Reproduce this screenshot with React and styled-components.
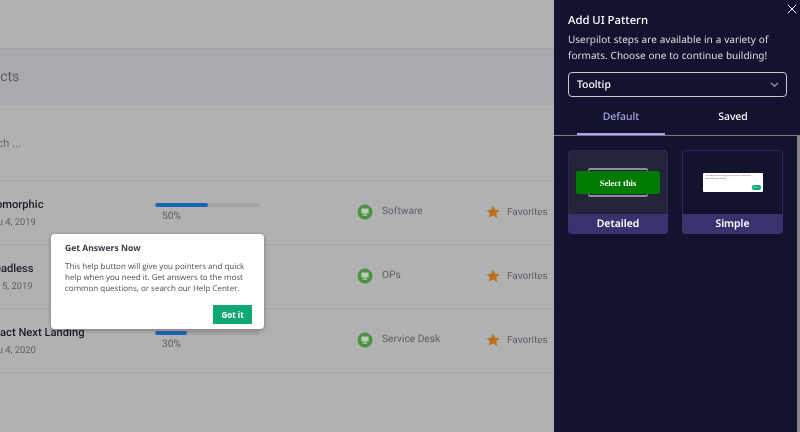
import React from "react";
import styled, { createGlobalStyle } from "styled-components";

const rows = [
  { name: "Isomorphic", date: "Thu 4, 2019", progress: 50, category: "Software" },
  { name: "Headless", date: "Jul 5, 2019", progress: 70, category: "OPs" },
  { name: "React Next Landing", date: "Thu 4, 2020", progress: 30, category: "Service Desk" },
];

const MonitorIcon = () => (
  <svg width="16" height="16" viewBox="0 0 16 16">
    <circle cx="8" cy="8" r="7.5" fill="#4c9244" />
    <rect x="4.4" y="4.4" width="7.2" height="5.2" rx="0.6" fill="#bccdb8" />
    <rect x="7" y="9.6" width="2" height="1.2" fill="#bccdb8" />
    <rect x="5.6" y="10.8" width="4.8" height="0.9" fill="#bccdb8" />
  </svg>
);

const StarIcon = () => (
  <svg width="14" height="14" viewBox="0 0 24 24">
    <path
      d="M12 1l3.4 7.3 7.9 1-5.8 5.4 1.5 7.9L12 17.8l-7 3.8 1.5-7.9L.7 9.3l7.9-1z"
      fill="#b96f1d"
    />
  </svg>
);

const App = () => {
  return (
    <>
      <GlobalStyle />
      <Page>
        <Main>
          <Content>
            <TopBar />
            <Band>Projects</Band>
            <SearchRow>Search ...</SearchRow>
            {rows.map((row) => (
              <Row key={row.name}>
                <NameCell>
                  <Name>{row.name}</Name>
                  <DateText>{row.date}</DateText>
                </NameCell>
                <ProgressCell>
                  <Track>
                    <Fill style={{ width: `${row.progress}%` }} />
                  </Track>
                  <Percent>{row.progress}%</Percent>
                </ProgressCell>
                <Category>
                  <MonitorIcon />
                  <span>{row.category}</span>
                </Category>
                <Favorite>
                  <StarIcon />
                  <span>Favorites</span>
                </Favorite>
              </Row>
            ))}
          </Content>
          <Popover>
            <PopTitle>Get Answers Now</PopTitle>
            <PopBody>
              This help button will give you pointers and quick help when you
              need it. Get answers to the most common questions, or search our
              Help Center.
            </PopBody>
            <PopFooter>
              <GotIt>Got it</GotIt>
            </PopFooter>
          </Popover>
        </Main>
        <Panel>
          <Close aria-label="Close">
            <svg width="10" height="10" viewBox="0 0 10 10">
              <path d="M.7.7l8.6 8.6M9.3.7L.7 9.3" stroke="#fff" strokeWidth="1" fill="none" />
            </svg>
          </Close>
          <PanelHead>
            <PanelTitle>Add UI Pattern</PanelTitle>
            <PanelText>
              Userpilot steps are available in a variety of formats. Choose one
              to continue building!
            </PanelText>
            <Select>
              <span>Tooltip</span>
              <svg width="9" height="9" viewBox="0 0 9 9">
                <path d="M1 2.8l3.5 3.4L8 2.8" stroke="#a9abb8" strokeWidth="1.1" fill="none" />
              </svg>
            </Select>
          </PanelHead>
          <Tabs>
            <Tab $active>Default</Tab>
            <Tab>Saved</Tab>
          </Tabs>
          <Cards>
            <Card>
              <Thumb $dark>
                <GreyBox>
                  <GreenBox>Select this</GreenBox>
                </GreyBox>
              </Thumb>
              <CardLabel>Detailed</CardLabel>
            </Card>
            <Card>
              <Thumb>
                <MiniPop>
                  <MiniText>
                    This help button will give you pointers and quick help when
                    you need it.
                  </MiniText>
                  <MiniButton>Got it</MiniButton>
                </MiniPop>
              </Thumb>
              <CardLabel>Simple</CardLabel>
            </Card>
          </Cards>
        </Panel>
      </Page>
    </>
  );
};

export default App;

const GlobalStyle = createGlobalStyle`
  html, body {
    margin: 0;
    padding: 0;
    background: #b1b1b1;
    text-rendering: geometricPrecision;
  }
`;

const Page = styled.div`
  width: 800px;
  height: 432px;
  display: flex;
  overflow: hidden;
  filter: blur(0.3px);
`;

const Main = styled.div`
  position: relative;
  width: 554px;
  height: 432px;
  overflow: hidden;
  background: #b1b1b1;
  font-family: Roboto, sans-serif;
`;

const Content = styled.div`
  width: 567px;
  margin-left: -13px;
`;

const TopBar = styled.div`
  height: 48px;
  border-bottom: 1px solid #a1a2aa;
`;

const Band = styled.div`
  height: 56px;
  display: flex;
  align-items: center;
  background: #a9aaae;
  font-size: 14px;
  color: #5c5d66;
  text-indent: -19px;
`;

const SearchRow = styled.div`
  height: 76px;
  display: flex;
  align-items: center;
  box-sizing: border-box;
  border-bottom: 1px solid #a6a6a8;
  font-size: 11.5px;
  color: #66676f;
  text-indent: -13px;
`;

const Row = styled.div`
  height: 64px;
  box-sizing: border-box;
  border-bottom: 1px solid #a6a6a8;
  display: grid;
  grid-template-columns: 168px 202px 129px 1fr;
`;

const NameCell = styled.div`
  padding-top: 16px;
`;

const Name = styled.div`
  font-size: 11.2px;
  font-weight: 500;
  line-height: 16px;
  color: #1d1d28;
`;

const DateText = styled.div`
  font-size: 9.4px;
  line-height: 14px;
  margin-top: 3px;
  color: #5e5f68;
`;

const ProgressCell = styled.div`
  padding-top: 22px;
`;

const Track = styled.div`
  width: 105px;
  height: 4px;
  border-radius: 2px;
  background: #a4a4a6;
  overflow: hidden;
`;

const Fill = styled.div`
  height: 100%;
  border-radius: 2px;
  background: #1b66b4;
`;

const Percent = styled.div`
  font-size: 10.3px;
  line-height: 13px;
  margin: 2px 0 0 7px;
  color: #5e5f68;
`;

const Category = styled.div`
  display: flex;
  align-items: center;
  gap: 9px;
  font-size: 10.2px;
  color: #5e5f68;
  padding-bottom: 2px;
`;

const Favorite = styled.div`
  display: flex;
  align-items: center;
  gap: 7px;
  font-size: 10px;
  color: #5e5f68;
  padding-bottom: 1px;
`;

const Popover = styled.div`
  position: absolute;
  left: 51px;
  top: 234px;
  width: 213px;
  height: 95px;
  box-sizing: border-box;
  padding: 8px 12px 0 14px;
  background: #fff;
  border-radius: 4px;
  box-shadow: 0 1px 4px rgba(0, 0, 0, 0.35);
  font-family: "Open Sans", sans-serif;
`;

const PopTitle = styled.div`
  font-size: 8.6px;
  font-weight: 700;
  line-height: 13px;
  color: #3a3b46;
`;

const PopBody = styled.div`
  margin-top: 6px;
  font-size: 8px;
  line-height: 11px;
  color: #4b4c56;
`;

const PopFooter = styled.div`
  display: flex;
  justify-content: flex-end;
  margin-top: 11px;
`;

const GotIt = styled.button`
  width: 39px;
  height: 19px;
  padding: 0;
  border: 0;
  background: #10a774;
  color: #fff;
  font-family: "Open Sans", sans-serif;
  font-size: 8px;
  font-weight: 700;
`;

const Panel = styled.div`
  position: relative;
  width: 246px;
  height: 432px;
  display: flex;
  flex-direction: column;
  background: #12132e;
  color: #fff;
  font-family: "Noto Sans", "Open Sans", sans-serif;
`;

const Close = styled.button`
  position: absolute;
  top: 4px;
  right: 3px;
  padding: 0;
  border: 0;
  background: none;
  line-height: 0;
`;

const PanelHead = styled.div`
  padding: 12px 13px 0 14px;
`;

const PanelTitle = styled.div`
  font-size: 11.3px;
  font-weight: 500;
  line-height: 17px;
`;

const PanelText = styled.div`
  margin-top: 2px;
  font-size: 10px;
  word-spacing: 0.3px;
  line-height: 16px;
  color: #dcdce4;
`;

const Select = styled.div`
  margin-top: 9px;
  height: 25px;
  box-sizing: border-box;
  padding: 0 7px 0 8px;
  display: flex;
  align-items: center;
  justify-content: space-between;
  border: 1px solid #c8c9d2;
  border-radius: 4px;
  font-size: 10.4px;
  font-weight: 500;
`;

const Tabs = styled.div`
  display: grid;
  grid-template-columns: 112px 112px;
  padding-left: 11px;
  height: 38px;
  border-bottom: 1px solid #7b7b80;
`;

const Tab = styled.div`
  display: flex;
  align-items: center;
  justify-content: center;
  margin: 0 12px;
  height: 38px;
  box-sizing: border-box;
  padding-top: 4px;
  font-size: 10.4px;
  font-weight: 500;
  color: ${(p) => (p.$active ? "#a6a4e8" : "#ffffff")};
  border-bottom: 2px solid ${(p) => (p.$active ? "#a9a8f0" : "transparent")};
`;

const Cards = styled.div`
  flex: 1;
  display: grid;
  grid-template-columns: 100px 101px;
  grid-auto-rows: 84px;
  gap: 14px;
  padding: 14px 0 0 14px;
  border-right: 3px solid #85858a;
`;

const Card = styled.div`
  border-radius: 4px;
  overflow: hidden;
  display: flex;
  flex-direction: column;
`;

const Thumb = styled.div`
  flex: 1;
  display: flex;
  align-items: center;
  justify-content: center;
  border: 1px solid #2a2958;
  border-bottom: 0;
  border-radius: 4px 4px 0 0;
  background: ${(p) => (p.$dark ? "#23243a" : "#12132e")};
`;

const GreyBox = styled.div`
  width: 60px;
  height: 29px;
  box-sizing: border-box;
  padding: 1px 0;
  background: #22233a;
  border: 1px solid #8f8f8f;
  border-width: 2px 1px;
  border-radius: 2px;
  display: flex;
`;

const GreenBox = styled.div`
  flex: 1;
  margin: 0 -13px;
  background: #007a00;
  border-radius: 2px;
  display: flex;
  align-items: center;
  justify-content: center;
  font-family: "Liberation Serif", serif;
  font-size: 8.5px;
  font-weight: 700;
  color: #fff;
`;

const CardLabel = styled.div`
  height: 20px;
  flex: none;
  display: flex;
  align-items: center;
  justify-content: center;
  background: #37336f;
  font-size: 10.4px;
  font-weight: 600;
`;

const MiniPop = styled.div`
  position: relative;
  width: 60px;
  height: 19px;
  box-sizing: border-box;
  padding: 2px 8px 0 3px;
  background: #fff;
  border-radius: 1px;
`;

const MiniText = styled.div`
  font-size: 2px;
  line-height: 2.6px;
  color: #555;
`;

const MiniButton = styled.div`
  position: absolute;
  right: 2px;
  bottom: 2px;
  width: 9px;
  height: 5px;
  border-radius: 2px;
  background: #10a774;
  color: #fff;
  font-size: 2px;
  line-height: 5px;
  text-align: center;
`;
